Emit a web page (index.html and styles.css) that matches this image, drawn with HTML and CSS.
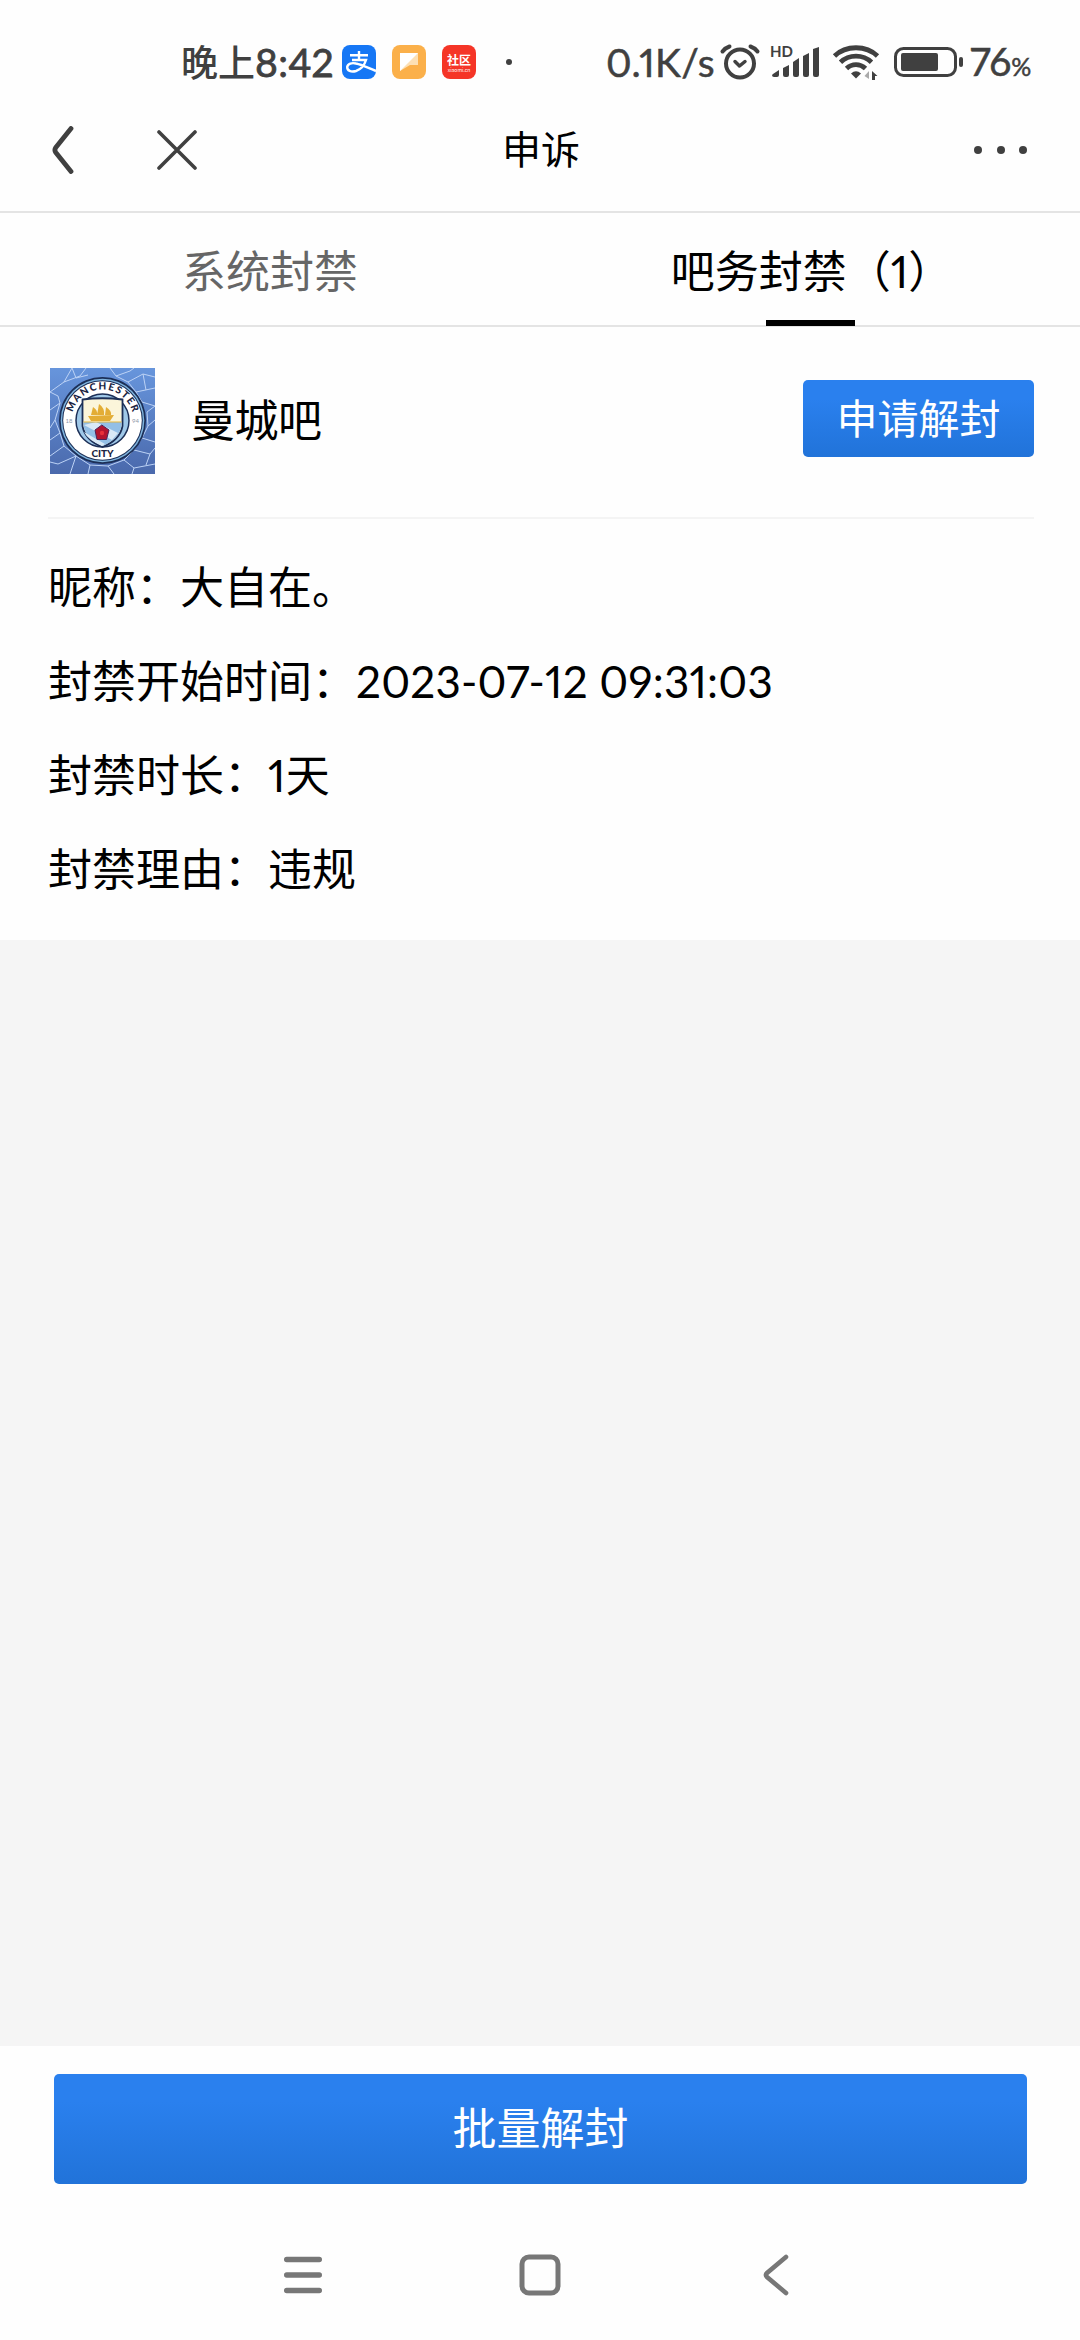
FILE: index.html
```
<!DOCTYPE html>
<html lang="zh-CN">
<head>
    <meta charset="UTF-8">
    <meta name="viewport" content="width=device-width, initial-scale=1.0">
    <title>申诉</title>
    <link rel="stylesheet" href="styles.css">
</head>
<body>
    <div class="status-bar">
        <span class="time">晚上<span class="time-num">8:42</span></span>
        <div class="app-icons">
            <svg width="34" height="34" viewBox="0 0 34 34">
                <rect width="34" height="34" rx="8" fill="#1677f5"/>
                <g fill="none" stroke="#fff" stroke-width="2.4">
                    <path d="M8 10.2H26M17 6V15M10 15H24C22.500 20 18.500 24.500 14 26C9 27.500 5 25.500 5.200 22C5.600 18.500 10 17.500 14 18.500C21 20 27 23.500 34 26"/>
                </g>
            </svg>
            <svg width="34" height="34" viewBox="0 0 34 34">
                <rect width="34" height="34" rx="8" fill="#fbb04a"/>
                <path d="M8 8H26V20L18 20L8 26Z" fill="#fde0b4"/>
                <path d="M8 8H26L8 26Z" fill="#fff"/>
            </svg>
            <svg width="34" height="34" viewBox="0 0 34 34">
                <rect width="34" height="34" rx="8" fill="#f53527"/>
                <text class="community" x="17" y="20" text-anchor="middle">社区</text>
                <text class="community-sub" x="17" y="27" text-anchor="middle">xiaomi.cn</text>
            </svg>
        </div>
        <span class="more-dot"></span>
        <span class="speed">0.1K/s</span>
        <svg class="alarm" width="40" height="36" viewBox="0 0 40 36" fill="none" stroke="#404040" stroke-linecap="round">
            <circle cx="20" cy="19.500" r="14" stroke-width="4"/>
            <path d="M15 17.500L19.500 22L25 17.500" stroke-width="3.500" stroke-linejoin="round"/>
            <path d="M2.500 7.500Q5 4 9.500 2.500M30.500 2.500Q35 4 37.500 7.500" stroke-width="4"/>
        </svg>
        <svg class="signal" width="50" height="34" viewBox="0 0 50 34" fill="#404040">
            <text class="hd" x="0" y="12">HD</text>
            <path d="M3 29L9 25V30Q9 32 7 32H4Q2 32 2 30ZM13 23L19 20V30Q19 32 17 32H15Q13 32 13 30ZM23 17L29 13V30Q29 32 27 32H25Q23 32 23 30ZM33 11L39 8V30Q39 32 37 32H35Q33 32 33 30ZM43 4L49 2V30Q49 32 47 32H45Q43 32 43 30Z"/>
        </svg>
        <svg class="wifi" width="46" height="35" viewBox="0 0 46 35">
            <g fill="none" stroke="#404040" stroke-width="4.800">
                <path d="M1.500 11C13 0 33 0 44.500 11"/>
                <path d="M7.500 17.200C16 9 30 9 38.500 17.200"/>
                <path d="M13.500 23.500C19 18.300 27 18.300 32.500 23.500"/>
            </g>
            <path d="M18 28.500Q23 24 28 28.500L23 33.500Z" fill="#404040"/>
            <path d="M36 26V34L31.500 31Z" fill="#aaa"/>
            <path d="M39 35V26L44.500 31H42V35Z" fill="#404040"/>
        </svg>
        <svg class="battery" width="70" height="30" viewBox="0 0 70 30">
            <rect x="1.500" y="1.500" width="60" height="27" rx="8" fill="none" stroke="#404040" stroke-width="3"/>
            <rect x="7" y="6" width="37" height="18" rx="2" fill="#404040"/>
            <rect x="65" y="10" width="4" height="10" rx="2" fill="#404040"/>
        </svg>
        <span class="level">76<span class="percent">%</span></span>
    </div>

    <header class="header">
        <svg class="back" width="22" height="48" viewBox="0 0 22 48" fill="none" stroke="#404040" stroke-width="4.800" stroke-linecap="round">
            <path d="M19 2.500L3.800 21.500Q2 24 3.800 26.500L19 45.500"/>
        </svg>
        <svg class="close" width="40" height="40" viewBox="0 0 40 40" stroke="#404040" stroke-width="3.600" stroke-linecap="round">
            <path d="M2 2L38 38M38 2L2 38"/>
        </svg>
        <h1>申诉</h1>
        <div class="menu"><i></i><i></i><i></i></div>
    </header>

    <nav class="tabs">
        <div class="tab">系统封禁</div>
        <div class="tab active">吧务封禁（<span class="num">1</span>）</div>
    </nav>

    <section class="card">
        <div class="forum">
            <svg class="avatar" width="105" height="106" viewBox="0 0 105 106">
                <defs>
                    <linearGradient id="sky" x1="0" y1="0" x2="0" y2="1">
                        <stop offset="0" stop-color="#6795dc"/>
                        <stop offset="1" stop-color="#4a69ac"/>
                    </linearGradient>
                    <path id="arc-top" d="M21.500 52.500A31 31 0 0 1 83.500 52.500"/>
                </defs>
                <rect width="105" height="106" fill="url(#sky)"/>
                <g fill="none" stroke="#bcd2f5" stroke-width="1">
                    <path d="M0 24L14 14L22 0M14 14L30 8L36 0M22 0L26 10L38 7M60 0L66 8L80 3L84 0M66 8L78 14L93 6L105 9M78 14L86 24L105 20M86 24L92 34L105 38M93 6L96 22"/>
                    <path d="M0 42L10 35L8 28L0 24M10 35L5 52L0 60M5 52L10 65L0 72M10 65L14 78L0 88M14 78L26 88L20 106M26 88L8 96L0 94M26 88L40 97L38 106M40 97L58 98L64 106"/>
                    <path d="M58 98L74 92L84 100L105 96M74 92L84 82L100 86L105 80M84 82L92 70L105 74M92 70L98 58L105 52M98 58L97 44L105 38M84 100L82 106M100 86L96 97"/>
                </g>
                <circle cx="52.500" cy="52.500" r="43.500" fill="#1c2f57"/>
                <circle cx="52.500" cy="52.500" r="41.800" fill="#7fb4de"/>
                <circle cx="52.500" cy="52.500" r="40.300" fill="#1c2f57"/>
                <circle cx="52.500" cy="52.500" r="39.300" fill="#fff"/>
                <circle cx="52.500" cy="52.500" r="26.500" fill="#9fc8e8" stroke="#1c2f57" stroke-width="1.500"/>
                <path d="M32.500 31.500Q52 29 72.500 31.500V58Q70 72 52.500 79Q35 72 32.500 58Z" fill="#fbf5da" stroke="#1c2f57" stroke-width="1.800"/>
                <path d="M33.500 54H71.500V58Q69 71 52.500 78Q36 71 33.500 58Z" fill="#93bfe6"/>
                <path d="M34 57L46 54L68 65L62 72ZM34 64L55 76L52 78Q38 72 34 64Z" fill="#d9e9f6"/>
                <path d="M33.500 54H71.500" stroke="#e5b63c" stroke-width="1.200"/>
                <path d="M38 48L64 47L60 53H41ZM43 39Q48 42 47 47H41ZM49 36Q55 40 54 47H47ZM56 39Q62 43 61 47H55Z" fill="#e3ad35"/>
                <path d="M51.800 57L59 62L56.500 71.500H47L45 62Z" fill="#b3152f" stroke="#4c2357" stroke-width="1"/>
                <circle cx="52" cy="65" r="2.200" fill="#e8303a"/>
                <text class="badge-text"><textPath href="#arc-top" startOffset="50%" text-anchor="middle" textLength="81">MANCHESTER</textPath></text>
                <text class="badge-text" x="52.500" y="89" text-anchor="middle">CITY</text>
                <text class="badge-year" x="19" y="55" text-anchor="middle">18</text>
                <text class="badge-year" x="85.500" y="55" text-anchor="middle">94</text>
            </svg>
            <span class="forum-name">曼城吧</span>
            <button class="btn apply">申请解封</button>
        </div>
        <div class="details">
            <p>昵称：大自在。</p>
            <p>封禁开始时间：<span class="num">2023-07-12 09:31:03</span></p>
            <p>封禁时长：<span class="num">1</span>天</p>
            <p>封禁理由：违规</p>
        </div>
    </section>

    <main class="blank"></main>

    <footer class="footer">
        <button class="btn batch">批量解封</button>
    </footer>

    <div class="nav-bar">
        <svg width="40" height="42" viewBox="0 0 40 42" stroke="#777" stroke-width="5.400" stroke-linecap="round">
            <path d="M3.700 5.500H36.300M3.700 21H36.300M3.700 36.500H36.300"/>
        </svg>
        <svg class="home" width="42" height="42" viewBox="0 0 42 42" fill="none" stroke="#777" stroke-width="5">
            <rect x="3" y="3" width="36" height="36" rx="7"/>
        </svg>
        <svg width="26" height="42" viewBox="0 0 26 42" fill="none" stroke="#777" stroke-width="4.600" stroke-linecap="round">
            <path d="M23 3L4 19Q2 21 4 23L23 39"/>
        </svg>
    </div>
</body>
</html>
```
FILE: styles.css
```
* {
    box-sizing: border-box;
    margin: 0;
    padding: 0;
}
body {
    width: 1080px;
    height: 2340px;
    display: flex;
    flex-direction: column;
    background: #fefefe;
    color: #000;
    font-family: "Noto Sans CJK SC", sans-serif;
    font-size: 44px;
    overflow: hidden;
}
.num, .time-num, .speed, .level {
    font-family: Lato, "Noto Sans CJK SC", sans-serif;
    font-variant-numeric: proportional-nums;
}
.num {
    letter-spacing: 0.2px;
}

/* status bar */
.status-bar {
    height: 124px;
    padding-left: 181px;
    display: flex;
    align-items: center;
    color: #404040;
    font-size: 37px;
    line-height: 60px;
    white-space: nowrap;
}
.status-bar svg {
    flex: none;
    overflow: visible;
}
.time {
    width: 161px;
    padding-bottom: 2px;
    font-weight: 500;
}
.time-num {
    font-size: 39px;
    font-weight: 400;
    letter-spacing: 0.3px;
    -webkit-text-stroke: 0.8px #404040;
}
.app-icons {
    display: flex;
    gap: 16px;
}
.community {
    font-size: 12px;
    font-weight: 700;
    fill: #fff;
}
.community-sub {
    font-size: 5px;
    fill: #fff;
}
.more-dot {
    width: 6px;
    height: 6px;
    margin: 0 94px 0 30px;
    border-radius: 50%;
    background: #404040;
}
.speed {
    width: 114px;
    font-size: 39px;
    letter-spacing: 0.3px;
    -webkit-text-stroke: 0.5px #404040;
}
.alarm {
    margin-right: 10px;
}
.hd {
    font-family: Lato, sans-serif;
    font-size: 15px;
    font-weight: 700;
}
.wifi {
    margin: 0 15px 0 13px;
}
.level {
    margin-left: 6px;
    padding-top: 2px;
    font-size: 39px;
    -webkit-text-stroke: 0.5px #404040;
}
.percent {
    font-size: 25px;
}

/* title bar */
.header {
    height: 89px;
    padding: 0 53px 35px 52px;
    display: flex;
    align-items: center;
    border-bottom: 2px solid #e4e4e4;
}
.close {
    margin-left: 83px;
}
.header h1 {
    margin-left: 305px;
    padding-bottom: 7px;
    font-size: 39px;
    font-weight: 400;
    line-height: 60px;
}
.menu {
    display: flex;
    gap: 14.500px;
    margin-left: auto;
}
.menu i {
    width: 8px;
    height: 8px;
    border-radius: 50%;
    background: #404040;
}

/* tabs */
.tabs {
    height: 114px;
    display: grid;
    grid-template-columns: 540px 540px;
    border-bottom: 2px solid #e4e4e4;
}
.tab {
    color: #666;
    line-height: 112px;
    text-align: center;
}
.tab.active {
    position: relative;
    padding-left: 3px;
    color: #000;
}
.tab.active::after {
    content: "";
    position: absolute;
    left: 226px;
    bottom: 1px;
    width: 89px;
    height: 6px;
    background: #000;
}

/* ban record */
.card {
    height: 613px;
    padding: 0 46px 0 48px;
}
.forum {
    height: 192px;
    padding: 0 0 2px 2px;
    display: flex;
    align-items: center;
    border-bottom: 2px solid #f4f4f4;
}
.forum-name {
    margin-left: 36px;
    padding-bottom: 6px;
    letter-spacing: -0.5px;
}
.badge-text {
    font-family: Lato, sans-serif;
    font-size: 10px;
    font-weight: 900;
    fill: #1b2442;
}
.badge-year {
    font-family: Lato, sans-serif;
    font-size: 6px;
    fill: #8d98a8;
}
.btn {
    border: none;
    border-radius: 5px;
    background: linear-gradient(#2a80ee 25%, #2173d9);
    color: #fff;
    font-family: inherit;
}
.apply {
    width: 231px;
    height: 77px;
    margin: 0 0 5px auto;
    padding-bottom: 5px;
    font-size: 41px;
    line-height: 70px;
}
.details {
    padding-top: 19px;
}
.details p {
    height: 94px;
    line-height: 94px;
    white-space: nowrap;
}

.blank {
    height: 1106px;
    background: #f5f5f5;
}
.footer {
    height: 138px;
    padding: 28px 53px 0 54px;
}
.batch {
    width: 100%;
    height: 110px;
    padding-bottom: 7px;
    font-size: 44px;
    line-height: 100px;
}

/* system navigation */
.nav-bar {
    flex: 1;
    padding: 26px 291px 0 283px;
    display: flex;
    align-items: center;
    justify-content: space-between;
}
.home {
    margin-right: 7px;
}
```
